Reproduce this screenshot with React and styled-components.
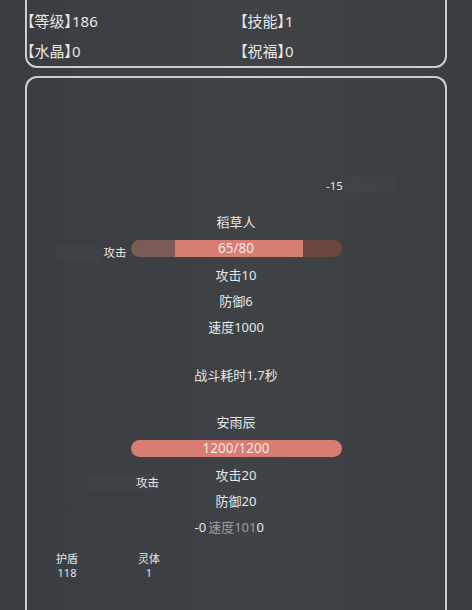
import React from 'react'
import styled, { createGlobalStyle } from 'styled-components'

const GlobalStyle = createGlobalStyle`
  html, body {
    margin: 0;
    padding: 0;
    background: #3a3d40;
    overflow: hidden;
  }
  body {
    font-family: "Noto Sans", "Noto Sans CJK SC", sans-serif;
    color: #e6e6e6;
  }
`

const Page = styled.div`
  width: 472px;
  height: 610px;
  overflow: hidden;
  padding: 0 25px;
  box-sizing: border-box;
  display: flex;
  flex-direction: column;
  background: linear-gradient(90deg, #3a3d40 0%, #3d4045 40%, #3f4346 55%, #3b3e41 100%);
`

const Panel = styled.div`
  border: 2px solid #cdcdcd;
  border-radius: 12px;
  position: relative;
  flex-shrink: 0;
`

const InfoPanel = styled(Panel)`
  margin: -20px 0 8px;
  padding: 24px 0 0 0;
  display: grid;
  grid-template-columns: 213px 1fr;
  grid-auto-rows: 30px;
`

const InfoItem = styled.div`
  font-size: 15px;
  line-height: 30px;
  white-space: nowrap;
  font-feature-settings: "palt";
`

const BattlePanel = styled(Panel)`
  flex: 1 0 auto;
  border-bottom: none;
  border-radius: 12px 12px 0 0;
  padding-top: 131px;
  display: flex;
  flex-direction: column;
  align-items: center;
`

const Line = styled.div`
  font-size: 13px;
  line-height: 26px;
  height: 26px;
  text-align: center;
  position: relative;
  margin-top: ${p => p.$gap || 0}px;
  color: ${p => p.$dim ? '#9a9c9e' : '#e6e6e6'};
`

const BarRow = styled.div`
  position: relative;
  margin: 5px 0;
`

const Bar = styled.div`
  width: 211px;
  height: 17px;
  border-radius: 9px;
  overflow: hidden;
  display: flex;
  position: relative;
  background: #6c4541;
`

const Segment = styled.div`
  height: 100%;
  background: ${p => p.$color};
  flex-shrink: 0;
`

const BarText = styled.div`
  position: absolute;
  inset: 0;
  text-align: center;
  font-size: 13.5px;
  line-height: 17px;
  color: #f4e6e4;
`

const FloatLabel = styled.div`
  position: absolute;
  font-size: 11.5px;
  line-height: 14px;
  white-space: nowrap;
  color: #e6e6e6;
`

const Ghost = styled.div`
  position: absolute;
  background: rgba(255, 255, 255, 0.02);
`

const Bright = styled.span`
  color: #e6e6e6;
`

const Stats = styled.div`
  align-self: flex-start;
  margin: 12px 0 0 20px;
  display: flex;
  gap: 42px;
`

const Stat = styled.div`
  width: 40px;
  text-align: center;
  font-size: 11px;
  line-height: 14px;
`

const Fighter = ({ name, hp, segments, atk, def, spd, children }) => (
  <>
    <Line>{name}</Line>
    <BarRow>
      {children}
      <Bar>
        {segments.map((s, i) => (
          <Segment key={i} $color={s.color} style={{ width: s.width }} />
        ))}
        <BarText>{hp}</BarText>
      </Bar>
    </BarRow>
    <Line>{atk}</Line>
    <Line>{def}</Line>
    {spd}
  </>
)

export default function App() {
  return (
    <>
      <GlobalStyle />
      <Page>
        <InfoPanel>
          <InfoItem>【等级】186</InfoItem>
          <InfoItem>【技能】1</InfoItem>
          <InfoItem>【水晶】0</InfoItem>
          <InfoItem>【祝福】0</InfoItem>
        </InfoPanel>
        <BattlePanel>
          <FloatLabel style={{ left: 299, top: 101 }}>-15</FloatLabel>
          <Ghost style={{ left: 318, top: 99, width: 50, height: 16 }} />
          <FloatLabel style={{ left: 109, top: 398 }}>攻击</FloatLabel>
          <Ghost style={{ left: 60, top: 396, width: 70, height: 16 }} />

          <Fighter
            name="稻草人"
            hp="65/80"
            segments={[
              { color: '#7b5b58', width: 44 },
              { color: '#d77d72', width: 128 }
            ]}
            atk="攻击10"
            def="防御6"
            spd={<Line>速度1000</Line>}
          >
            <Ghost style={{ right: 'calc(100% + 30px)', top: 5, width: 45, height: 17 }} />
            <FloatLabel style={{ right: 'calc(100% + 4px)', top: 6 }}>攻击</FloatLabel>
          </Fighter>

          <Line $gap={22}>战斗耗时1.7秒</Line>

          <Line $gap={21}>安雨辰</Line>
          <BarRow>
            <Bar>
              <Segment $color="#d77d72" style={{ width: '100%' }} />
              <BarText>1200/1200</BarText>
            </Bar>
          </BarRow>
          <Line>攻击20</Line>
          <Line>防御20</Line>
          <Line $dim>
            <FloatLabel style={{ right: 'calc(100% + 2px)', top: 6, fontSize: 13 }}>-0</FloatLabel>
            速度101<Bright>0</Bright>
          </Line>

          <Stats>
            <Stat>护盾<br />118</Stat>
            <Stat>灵体<br />1</Stat>
          </Stats>
        </BattlePanel>
      </Page>
    </>
  )
}
